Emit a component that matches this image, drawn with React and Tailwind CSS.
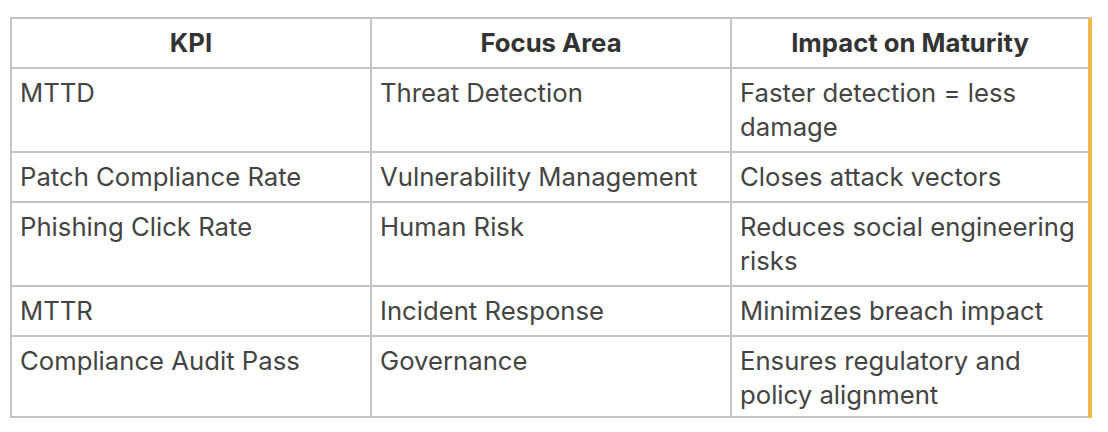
import React from "react";

const rows = [
  ["MTTD", "Threat Detection", "Faster detection = less damage"],
  ["Patch Compliance Rate", "Vulnerability Management", "Closes attack vectors"],
  ["Phishing Click Rate", "Human Risk", "Reduces social engineering risks"],
  ["MTTR", "Incident Response", "Minimizes breach impact"],
  ["Compliance Audit Pass", "Governance", "Ensures regulatory and policy alignment"],
];

export default function App() {
  return (
    <div className="w-[1108px] h-[432px] bg-white pl-[10px] pt-[17px]" style={{ fontFamily: "Inter, 'Noto Sans', sans-serif" }}>
      <div className="w-[1082px] grid grid-cols-[360px_360px_356px] border-l-2 border-t-2 border-[#c4c4c4] border-r-4 border-r-[#f2b84b] text-[25.7px] leading-[34px]">
        {["KPI", "Focus Area", "Impact on Maturity"].map((h, i) => (
          <div key={h} className={`py-[7px] px-[8px] text-center font-bold text-[#333] border-b-2 border-[#c4c4c4] ${i < 2 ? "border-r-2" : ""}`}>
            {h}
          </div>
        ))}
        {rows.map((r, ri) =>
          r.map((c, i) => (
            <div
              key={r[0] + i}
              className={`pl-[8px] pr-[6px] text-[#444] border-b-2 border-[#c4c4c4] ${i < 2 ? "border-r-2" : ""} ${ri === rows.length - 1 ? "pt-[7px] pb-[4px]" : "py-[7px]"}`}
            >
              {c}
            </div>
          ))
        )}
      </div>
    </div>
  );
}
